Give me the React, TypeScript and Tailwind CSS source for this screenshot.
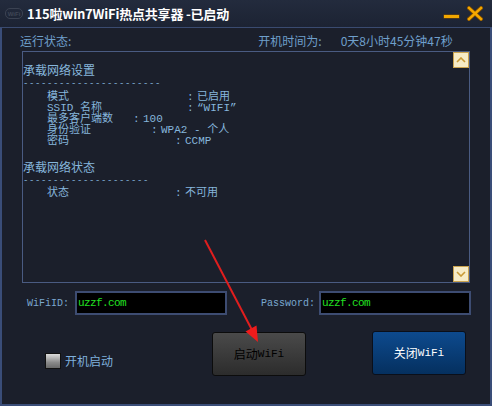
import React from "react";

const mono = { fontFamily: '"Liberation Mono", "Noto Sans CJK SC", monospace' };
const cjk = { fontFamily: '"Noto Sans CJK SC", "Liberation Sans", sans-serif' };

function Row({ label, w, value }: { label: string; w: number; value: string }) {
  return (
    <div className="flex h-[11px] items-center text-[11px] leading-[11px] pl-[24px] whitespace-pre">
      <span className="inline-block" style={{ width: w }}>{label}</span>
      <span className="inline-block w-[10px]">:</span>
      <span>{value}</span>
    </div>
  );
}

function ScrollBtn({ up }: { up?: boolean }) {
  return (
    <div className="w-[16px] h-[16px] bg-[#f6ebc6] border border-[#c9a24e] flex items-center justify-center">
      <svg width="10" height="6" viewBox="0 0 10 6">
        <path d={up ? "M1 5 L5 1 L9 5" : "M1 1 L5 5 L9 1"} stroke="#c89a36" strokeWidth="1.6" fill="none" />
      </svg>
    </div>
  );
}

export default function App() {
  return (
    <div className="relative w-[492px] h-[406px] bg-[#1b1f2b] flex flex-col overflow-hidden" style={cjk}>
      {/* title bar */}
      <div className="h-[28px] shrink-0 flex items-center border-b border-[#3a4b70] bg-[linear-gradient(180deg,#232b3d,#1c2333)] relative">
        <div className="ml-[5px] w-[18px] h-[11px] rounded-[5px] border border-[#3b4252] flex items-center justify-center text-[6px] font-bold text-[#3f4656] leading-none" style={{ fontFamily: '"Liberation Sans", sans-serif' }}>
          WiFi
        </div>
        <div className="ml-[4px] text-white text-[13px] font-bold leading-none tracking-[-0.2px]">
          115啦win7WiFi热点共享器 -已启动
        </div>
        <div className="ml-auto mr-[9px] flex items-center gap-[8px]">
          <div className="w-[15px] h-[3px] bg-[#f2a700] mt-[6px] shadow-[0_0_0_0.5px_#7a4a00]" />
          <svg width="16" height="15" viewBox="0 0 16 15">
            <path d="M2 2 L14 13 M14 2 L2 13" stroke="#7a4a00" strokeWidth="4" strokeLinecap="square" />
            <path d="M2 2 L14 13 M14 2 L2 13" stroke="#f5a800" strokeWidth="2.4" strokeLinecap="square" />
          </svg>
        </div>
      </div>

      {/* body */}
      <div className="flex-1 flex flex-col border-l-2 border-r-2 border-b-2 border-[#3a4d78]">
        <div className="flex items-center h-[14px] mt-[6px] text-[12px] leading-[14px] text-[#6f9fcb]">
          <span className="ml-[18px]">运行状态:</span>
          <span className="ml-[187px]">开机时间为:</span>
          <span className="ml-[19px]">0天8小时45分钟47秒</span>
        </div>

        <div className="mt-[3px] ml-[20px] w-[448px] h-[232px] border border-[#4a5b82] flex">
          <div className="flex-1 text-[12px] text-[#86b6dc] pt-[14px]" style={mono}>
            <div className="h-[12px] leading-[12px]">承载网络设置</div>
            <div className="h-[11px] leading-[11px] text-[9px] tracking-[0.6px] pt-[1px]">-----------------------</div>
            <div className="mt-[3px]">
              <Row label="模式" w={140} value="已启用" />
              <Row label="SSID 名称" w={140} value="“WIFI”" />
              <Row label="最多客户端数" w={86} value="100" />
              <Row label="身份验证" w={104} value="WPA2 - 个人" />
              <Row label="密码" w={128} value="CCMP" />
            </div>
            <div className="mt-[16px] h-[12px] leading-[12px]">承载网络状态</div>
            <div className="h-[11px] leading-[11px] text-[9px] tracking-[0.6px] pt-[1px]">---------------------</div>
            <div className="mt-[2px]">
              <Row label="状态" w={128} value="不可用" />
            </div>
          </div>
          <div className="w-[16px] flex flex-col justify-between">
            <ScrollBtn up />
            <ScrollBtn />
          </div>
        </div>

        <div className="mt-[8px] flex items-center h-[24px]">
          <span className="ml-[25px] w-[48px] text-[10px] text-[#7aa8d0]" style={mono}>WiFiID:</span>
          <div className="w-[152px] h-[24px] border-2 border-[#3d4c72] bg-black flex items-center pl-[1px] text-[11px] text-[#22e022] tracking-[-0.6px]" style={mono}>
            uzzf.com
          </div>
          <span className="ml-[34px] w-[58px] text-[10px] text-[#7aa8d0]" style={mono}>Password:</span>
          <div className="w-[152px] h-[24px] border-2 border-[#3d4c72] bg-black flex items-center pl-[1px] text-[11px] text-[#22e022] tracking-[-0.6px]" style={mono}>
            uzzf.com
          </div>
        </div>

        <div className="mt-[17px] flex items-start">
          <div className="ml-[43px] mt-[20px] flex items-center">
            <div className="w-[16px] h-[16px] border border-[#111] bg-[linear-gradient(180deg,#dcdcdc,#8a8a8a_60%,#6a6a6a)]" />
            <span className="ml-[4px] text-[12px] text-[#7fb0dc]">开机启动</span>
          </div>
          <div className="ml-[99px] w-[94px] h-[44px] rounded-[3px] border border-[#0c0c0c] bg-[linear-gradient(180deg,#4a4a4a,#2c2c2c)] flex items-center justify-center text-[12px] text-[#000]">
            启动<span className="text-[11px]" style={mono}>WiFi</span>
          </div>
          <div className="ml-[66px] -mt-[1px] w-[94px] h-[44px] rounded-[3px] border border-[#0a0f1a] bg-[linear-gradient(180deg,#0d4a8e,#05305f)] flex items-center justify-center text-[12px] text-white">
            关闭<span className="text-[11px]" style={mono}>WiFi</span>
          </div>
        </div>
      </div>

      {/* annotation arrow */}
      <svg className="absolute left-0 top-0 pointer-events-none" width="492" height="406" viewBox="0 0 492 406">
        <line x1="205" y1="240" x2="252" y2="330" stroke="#e01e1e" strokeWidth="2" />
        <polygon points="258,342 245.5,331.5 256.5,325.5" fill="#ee1c1c" />
      </svg>
    </div>
  );
}
